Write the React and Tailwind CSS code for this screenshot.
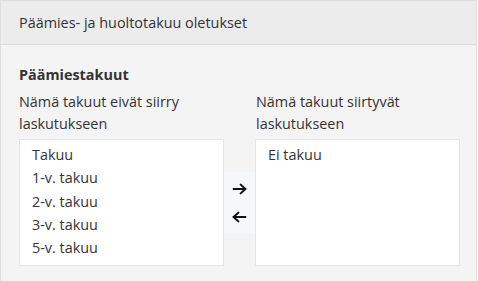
import React from 'react';

const LEFT_ITEMS = ['Takuu', '1-v. takuu', '2-v. takuu', '3-v. takuu', '5-v. takuu'];
const RIGHT_ITEMS = ['Ei takuu'];

const Arrow = ({ dir }) => (
  <svg width="15" height="12" viewBox="0 0 15 12" fill="none" stroke="#111" strokeWidth="1.8" strokeLinecap="round" strokeLinejoin="round">
    {dir === 'right' ? (
      <>
        <path d="M1.5 6h12" />
        <path d="M8.5 1.5 13.5 6l-5 4.5" />
      </>
    ) : (
      <>
        <path d="M13.5 6h-12" />
        <path d="M6.5 1.5 1.5 6l5 4.5" />
      </>
    )}
  </svg>
);

const ListBox = ({ items }) => (
  <div className="bg-white border border-[#e6e6e6] h-[127px] pt-[3px] px-[12px]">
    {items.map((item) => (
      <div key={item} className="h-[23.3px] leading-[23.3px]">
        {item}
      </div>
    ))}
  </div>
);

const App = () => {
  return (
    <div
      className="w-[478px] h-[281px] overflow-hidden bg-white text-[14.4px] text-[#333]"
      style={{ fontFamily: '"Open Sans", "Liberation Sans", sans-serif' }}
    >
      <div className="w-[477px] border border-[#dedede] border-b-0">
        {/* Header */}
        <div className="h-[44px] bg-[#ececec] border-b border-[#dcdcdc] px-[18px] flex items-center">
          Päämies- ja huoltotakuu oletukset
        </div>

        {/* Body */}
        <div className="bg-[#f4f4f4] h-[240px] pl-[18px] pr-[16px] pt-[19px]">
          <div className="font-bold leading-[22px] mb-[5px]">Päämiestakuut</div>
          <div className="grid grid-cols-[205px_31px_205px] items-center">
            <div className="self-start leading-[22px] pb-[4px]">
              Nämä takuut eivät siirry
              <br />
              laskutukseen
            </div>
            <div />
            <div className="self-start leading-[22px] pb-[4px] pl-[1px]">
              Nämä takuut siirtyvät
              <br />
              laskutukseen
            </div>

            <ListBox items={LEFT_ITEMS} />
            <div className="bg-[#f5f7f9] h-[61px] flex flex-col items-center justify-center gap-[16px]">
              <Arrow dir="right" />
              <Arrow dir="left" />
            </div>
            <ListBox items={RIGHT_ITEMS} />
          </div>
        </div>
      </div>
    </div>
  );
};

export default App;
